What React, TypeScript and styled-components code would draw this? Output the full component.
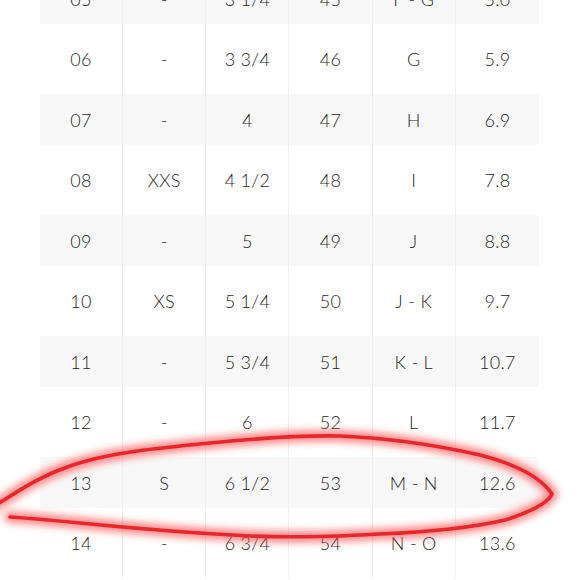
import React from "react";
import styled, { createGlobalStyle } from "styled-components";

const Global = createGlobalStyle`
  html, body { margin: 0; padding: 0; background: #ffffff; overflow: hidden; }
  body { font-family: "Lato", "Noto Sans", sans-serif; }
`;

const Page = styled.div`
  position: relative;
  width: 579px;
  height: 580px;
  overflow: hidden;
  background: #ffffff;
`;

const Table = styled.div`
  display: flex;
  flex-direction: column;
  width: 499px;
  margin: -27px 0 0 40px;
`;

const Row = styled.div<{ $striped: boolean }>`
  display: grid;
  grid-template-columns: repeat(6, 1fr);
  height: ${(p) => (p.$striped ? 51 : 70)}px;
  background: ${(p) => (p.$striped ? "#f8f8f8" : "#ffffff")};
`;

const Cell = styled.div`
  display: flex;
  align-items: center;
  justify-content: center;
  font-size: 18px;
  font-weight: 300;
  color: #1f1f1f;
  letter-spacing: 0.3px;
  border-right: 1px solid #efefef;
  &:last-child { border-right: none; }
`;

const Overlay = styled.svg`
  position: absolute;
  left: 0;
  top: 0;
  pointer-events: none;
`;

const rows: string[][] = [
  ["05", "-", "3 1/4", "45", "F - G", "5.0"],
  ["06", "-", "3 3/4", "46", "G", "5.9"],
  ["07", "-", "4", "47", "H", "6.9"],
  ["08", "XXS", "4 1/2", "48", "I", "7.8"],
  ["09", "-", "5", "49", "J", "8.8"],
  ["10", "XS", "5 1/4", "50", "J - K", "9.7"],
  ["11", "-", "5 3/4", "51", "K - L", "10.7"],
  ["12", "-", "6", "52", "L", "11.7"],
  ["13", "S", "6 1/2", "53", "M - N", "12.6"],
  ["14", "-", "6 3/4", "54", "N - O", "13.6"],
];

const ellipse =
  "M -4 505 C 20 490, 40 476, 70 466 C 110 452, 160 448, 210 443 C 260 438, 300 435, 340 436 C 390 438, 440 446, 480 455 C 515 464, 540 476, 552 494 C 548 503, 530 512, 505 520 C 470 528, 430 532, 380 534 C 340 536, 300 538, 250 536 C 190 533, 130 528, 80 523 C 50 520, 25 518, 10 517";

export default function App() {
  return (
    <Page>
      <Global />
      <Table>
        {rows.map((r, i) => (
          <Row key={r[0]} $striped={i % 2 === 0}>
            {r.map((c, j) => (
              <Cell key={j}>{c}</Cell>
            ))}
          </Row>
        ))}
      </Table>
      <Overlay width="579" height="580" viewBox="0 0 579 580">
        <defs>
          <filter id="glow" x="-10%" y="-50%" width="120%" height="200%">
            <feGaussianBlur stdDeviation="3.5" />
          </filter>
        </defs>
        <path d={ellipse} fill="none" stroke="#ff4040" strokeOpacity="0.6" strokeWidth="12" strokeLinecap="round" filter="url(#glow)" />
        <path d={ellipse} fill="none" stroke="#e8262b" strokeWidth="3.6" strokeLinecap="round" />
      </Overlay>
    </Page>
  );
}
